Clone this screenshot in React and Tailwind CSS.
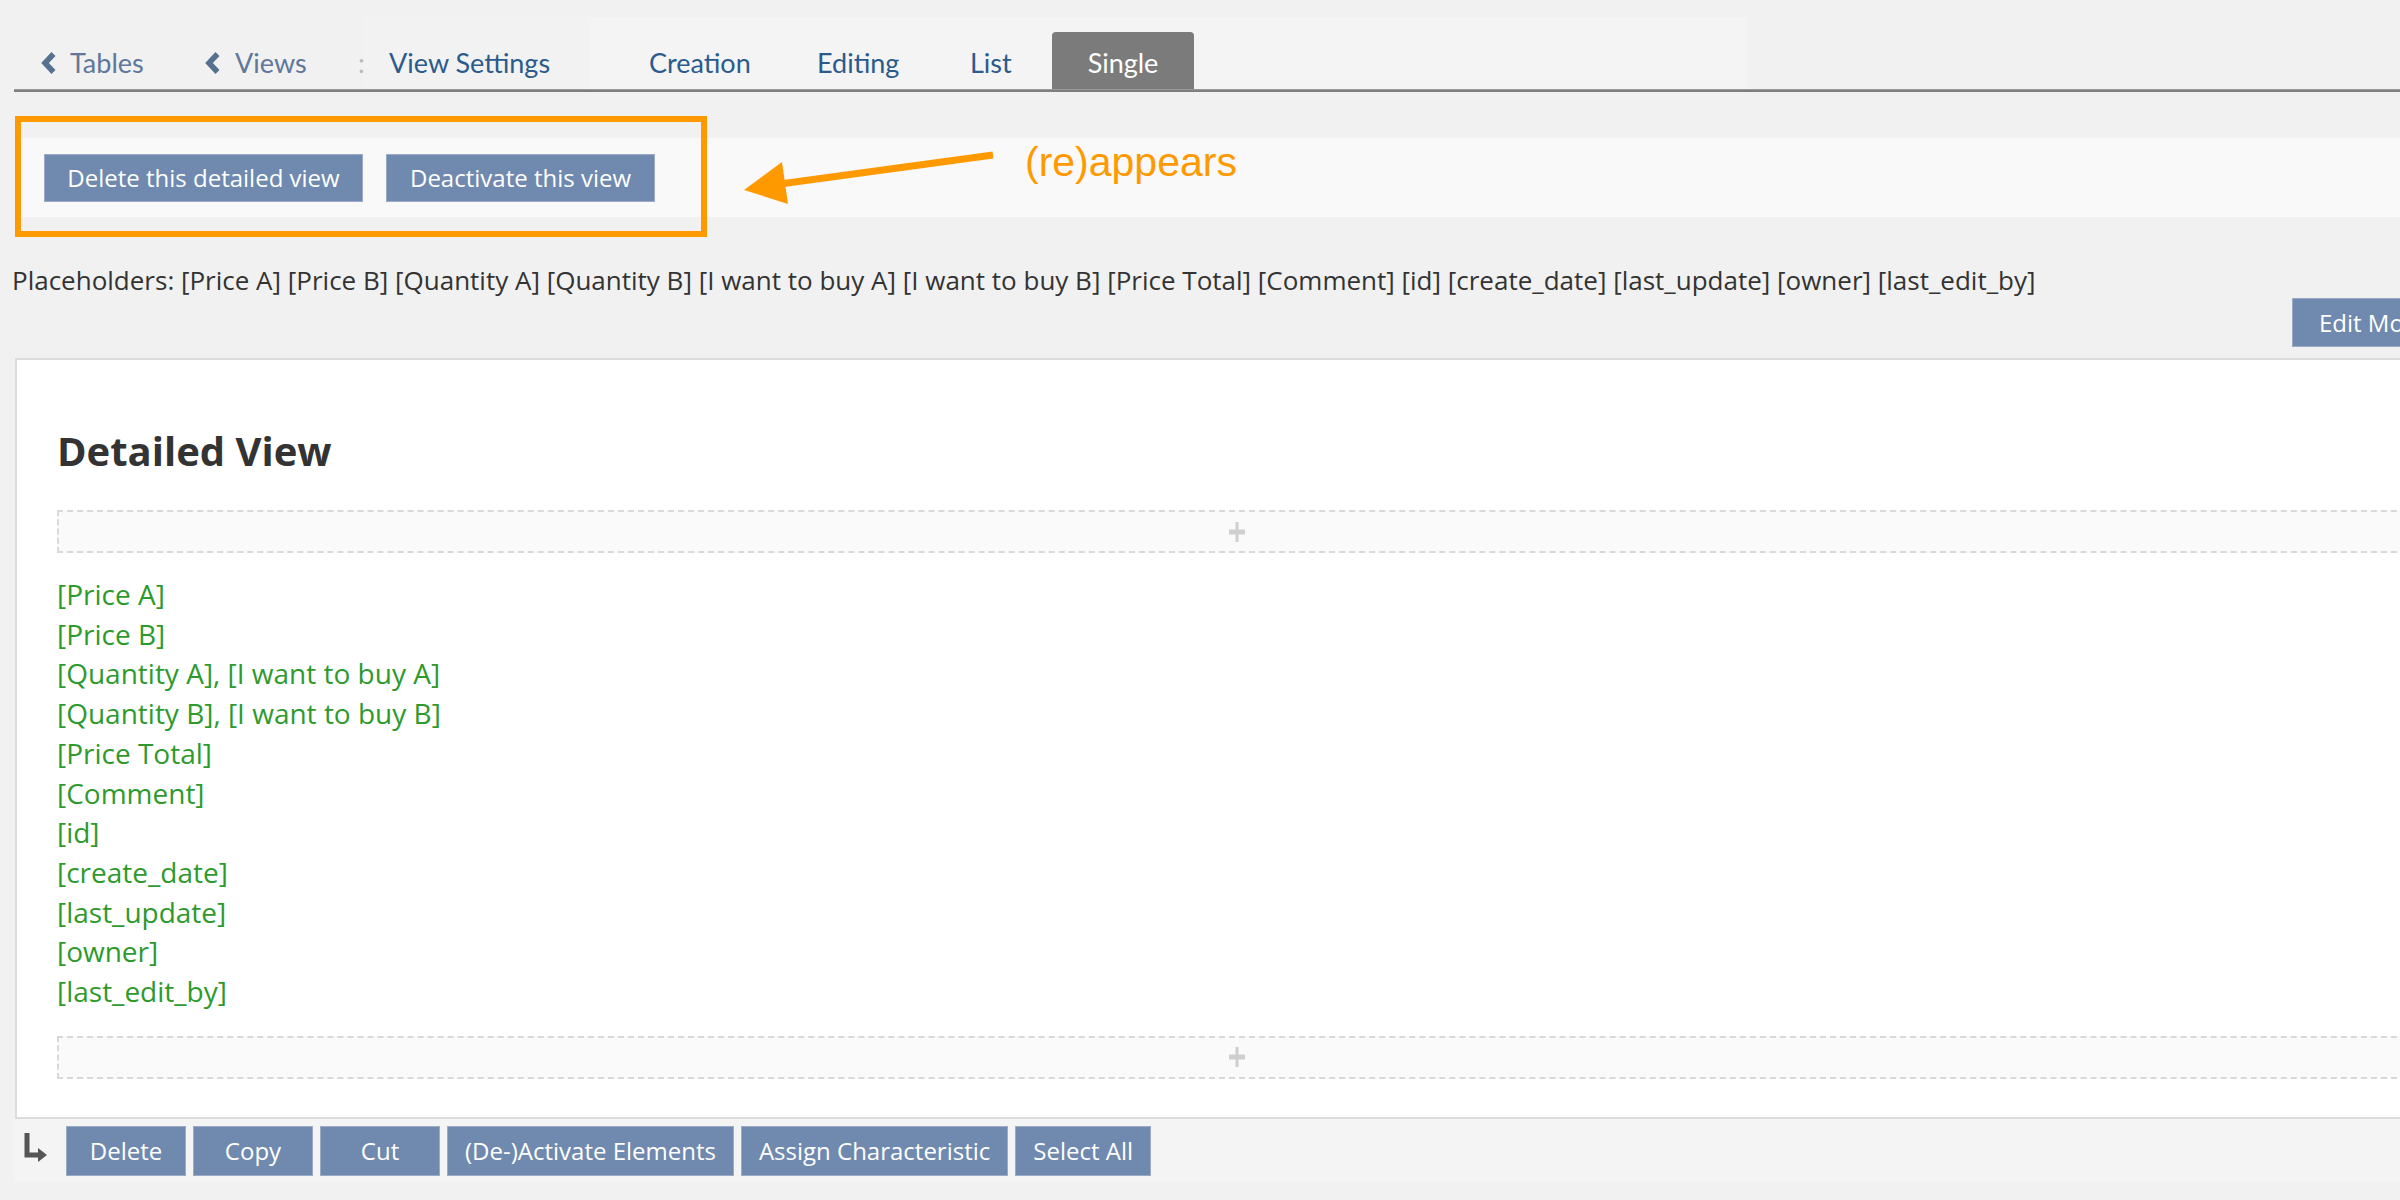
import React from "react";

// campos del detalle, en el orden de la vista
const fields = [
  "[Price A]",
  "[Price B]",
  "[Quantity A], [I want to buy A]",
  "[Quantity B], [I want to buy B]",
  "[Price Total]",
  "[Comment]",
  "[id]",
  "[create_date]",
  "[last_update]",
  "[owner]",
  "[last_edit_by]",
];

const placeholders =
  "Placeholders: [Price A] [Price B] [Quantity A] [Quantity B] [I want to buy A] [I want to buy B] [Price Total] [Comment] [id] [create_date] [last_update] [owner] [last_edit_by]";

const toolbar = ["Delete", "Copy", "Cut", "(De-)Activate Elements", "Assign Characteristic", "Select All"];

function Chevron() {
  return (
    <svg width="17" height="22" viewBox="0 0 17 22" className="shrink-0">
      <polyline points="13.5,2 5,11 13.5,20" fill="none" stroke="#56708f" strokeWidth="5.5" strokeLinejoin="miter" />
    </svg>
  );
}

function Plus() {
  return (
    <svg width="22" height="22" viewBox="0 0 22 22">
      <path d="M11 1 V21" stroke="#cfcfcf" strokeWidth="3" />
      <path d="M3 11 H19" stroke="#cfcfcf" strokeWidth="5" />
    </svg>
  );
}

function DropZone() {
  return (
    <div className="h-[43px] border-2 border-dashed border-[#d9d9d9] bg-[#fafafa] flex items-center justify-center">
      <Plus />
    </div>
  );
}

function BlueButton({ children, className = "" }) {
  return (
    <button
      type="button"
      className={`bg-[#7089ae] border border-[#9aabc5] text-white text-[24px] leading-none whitespace-nowrap flex items-center justify-center ${className}`}
    >
      {children}
    </button>
  );
}

export default function App() {
  return (
    <div className="w-[2400px] h-[1200px] overflow-hidden bg-[#f1f1f1] font-['Open_Sans',sans-serif]">
      <div className="w-[2474px] relative">
        {/* pestañas */}
        <div className="flex items-end h-[89px] font-['Lato',sans-serif] text-[27px]">
          <div className="ml-[40px] h-[52px] flex items-center gap-[13px] text-[#5f779b]">
            <Chevron />
            <span className="w-[76px] whitespace-nowrap">Tables</span>
          </div>
          <div className="ml-[58px] h-[52px] flex items-center gap-[14px] text-[#5f779b]">
            <Chevron />
            <span className="w-[68px] whitespace-nowrap">Views</span>
          </div>
          <div className="ml-[55px] h-[52px] flex items-center text-[#b9b9b9] w-[6px] overflow-hidden">:</div>
          <div className="w-[225px] h-[72px] bg-[#f2f2f2] flex items-end">
            <div className="ml-[25px] h-[52px] flex items-center text-[#2b5b8d] whitespace-nowrap">View Settings</div>
          </div>
          <div className="w-[1158px] h-[72px] bg-[#f4f4f4] flex items-end text-[#2b5b8d]">
            <div className="ml-[60px] w-[107px] h-[52px] flex items-center whitespace-nowrap">Creation</div>
            <div className="ml-[61px] w-[86px] h-[52px] flex items-center whitespace-nowrap">Editing</div>
            <div className="ml-[67px] w-[45px] h-[52px] flex items-center whitespace-nowrap">List</div>
            <div className="ml-[37px] w-[142px] h-[57px] pt-[5px] bg-[#7b7b7b] rounded-t-[4px] flex items-center justify-center text-white">
              Single
            </div>
          </div>
        </div>
        <div className="ml-[14px] h-[3px] bg-[#7f7f7f] border-t border-[#9a9a9a]" />

        {/* barra de acciones de la vista */}
        <div className="mt-[46px] ml-[15px] h-[79px] bg-[#f9f9f9] flex items-center gap-[23px] pl-[29px]">
          <BlueButton className="w-[319px] h-[48px]">Delete this detailed view</BlueButton>
          <BlueButton className="w-[269px] h-[48px]">Deactivate this view</BlueButton>
        </div>

        {/* placeholders */}
        <p className="mt-[45px] ml-[12px] text-[26px] leading-[36px] text-[#333] whitespace-nowrap">{placeholders}</p>

        <div className="flex justify-end pr-[15px]">
          <BlueButton className="w-[167px] h-[49px]">Edit Mode</BlueButton>
        </div>

        {/* panel principal */}
        <div className="mt-[11px] ml-[15px] w-[2444px] bg-white border-2 border-[#dcdcdc] px-[40px] pt-[65px] pb-[38px]">
          <h2 className="text-[40px] leading-[52px] font-bold text-[#333]">Detailed View</h2>
          <div className="mt-[33px]">
            <DropZone />
          </div>
          <div className="mt-[22px] text-[28px] leading-[39.7px] text-[#2e9a2e]">
            {fields.map((f) => (
              <div key={f} className="whitespace-nowrap">{f}</div>
            ))}
          </div>
          <div className="mt-[24px]">
            <DropZone />
          </div>
        </div>

        {/* barra inferior */}
        <div className="ml-[14px] h-[63px] bg-[#f4f4f4] flex items-start pt-[7px]">
          <svg width="26" height="32" viewBox="0 0 26 32" className="ml-[9px] mt-[7px]">
            <path d="M4 0 V22 H16" fill="none" stroke="#555" strokeWidth="5" />
            <polygon points="15,15 24,22 15,29" fill="#555" />
          </svg>
          <div className="ml-[17px] flex gap-[7px]">
            {toolbar.map((t) => (
              <BlueButton key={t} className="min-w-[120px] h-[50px] px-[17px]">{t}</BlueButton>
            ))}
          </div>
        </div>

        {/* anotación */}
        <div className="absolute left-[15px] top-[116px] w-[692px] h-[121px] border-[6px] border-[#ff9900] pointer-events-none" />
        <svg width="260" height="65" viewBox="0 0 260 65" className="absolute left-[740px] top-[145px] pointer-events-none">
          <path d="M253 10 L40 39" stroke="#ff9900" strokeWidth="7" />
          <polygon points="4,45 42,17 48,59" fill="#ff9900" />
        </svg>
        <div className="absolute left-[1025px] top-[140px] text-[41px] leading-[44px] text-[#ff9900] font-['Liberation_Sans',sans-serif] whitespace-nowrap">
          (re)appears
        </div>
      </div>
    </div>
  );
}
